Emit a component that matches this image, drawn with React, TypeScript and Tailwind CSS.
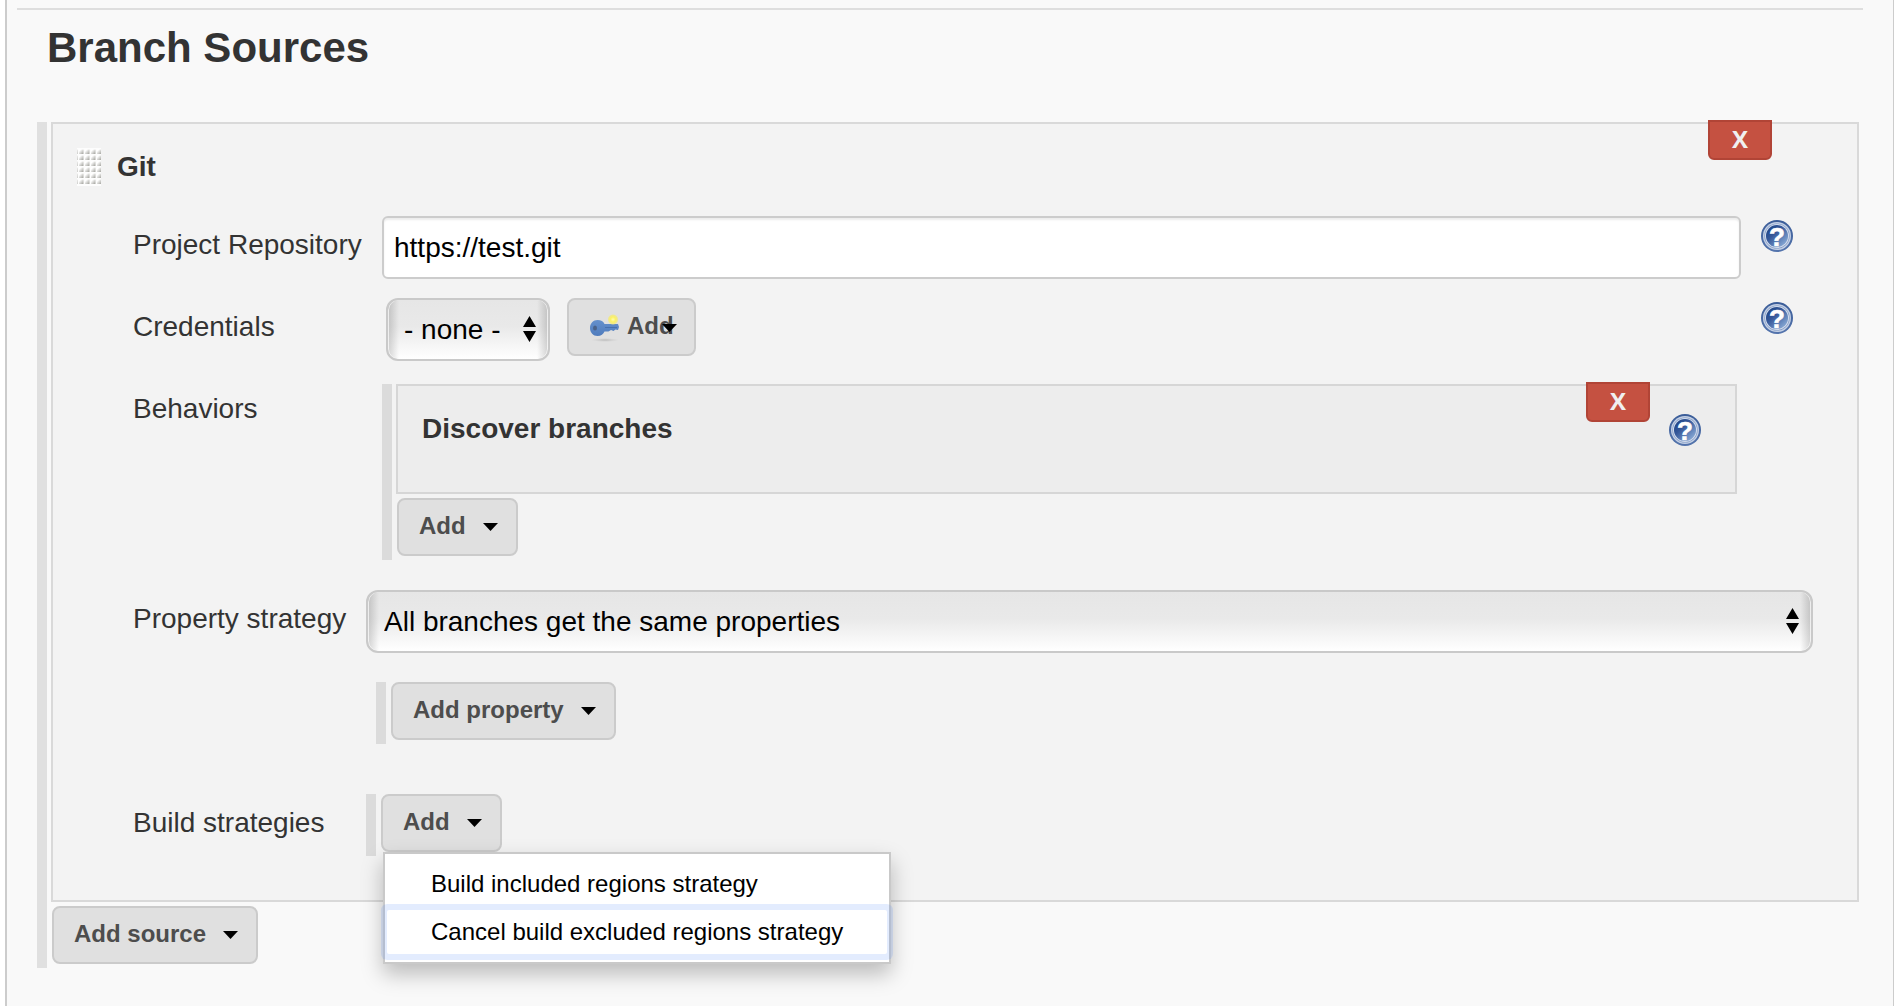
import type { ReactNode } from "react";

function HelpButton({ topic }: { topic: string }) {
  return (
    <button type="button" aria-label={"Help for " + topic} className="size-8 shrink-0">
      <svg viewBox="0 0 32 32" className="size-8" aria-hidden="true">
        <defs>
          <linearGradient id="help-fill" x1="0.1" y1="0.1" x2="0.9" y2="0.95">
            <stop offset="0" stopColor="#1f4587" />
            <stop offset="0.35" stopColor="#35589a" />
            <stop offset="1" stopColor="#8fb0da" />
          </linearGradient>
          <linearGradient id="help-rim" x1="0" y1="0" x2="0" y2="1">
            <stop offset="0" stopColor="#3a5c98" />
            <stop offset="1" stopColor="#5575ad" />
          </linearGradient>
        </defs>
        <circle cx="16" cy="16" r="16" fill="url(#help-rim)" />
        <circle cx="16" cy="16" r="14" fill="#c3cfe4" />
        <circle cx="16" cy="16" r="12.6" fill="#7d97c3" />
        <circle cx="16" cy="16" r="12" fill="#d3dcec" />
        <circle cx="16" cy="16" r="11" fill="url(#help-fill)" />
        <text
          x="16"
          y="25.500"
          textAnchor="middle"
          fill="#ffffff"
          stroke="#ffffff"
          strokeWidth="0.600"
          fontSize="26"
          fontWeight="700"
          fontFamily="Liberation Sans, sans-serif"
        >
          ?
        </text>
      </svg>
    </button>
  );
}

function DeleteButton({ label }: { label: string }) {
  return (
    <button
      type="button"
      aria-label={label}
      className="h-10 w-16 rounded-b-md border-2 border-[#b14436] bg-[#c55141] pb-0.5 text-center font-['Open_Sans',sans-serif] text-2xl leading-8 font-bold text-[#f0f0f0]"
    >
      X
    </button>
  );
}

function Caret() {
  return (
    <svg viewBox="0 0 15 8" className="h-2 w-[15px] shrink-0" aria-hidden="true">
      <path d="M0 0H15L7.5 8Z" fill="#000" />
    </svg>
  );
}

function MenuButton({ children }: { children: ReactNode }) {
  return (
    <button
      type="button"
      className="flex h-[58px] items-center gap-[17px] rounded-lg border-2 border-[#cbcbcb] bg-[#e0e0e0] pr-[18px] pb-0.5 pl-5 text-2xl font-bold whitespace-nowrap text-[#4d4d4d]"
    >
      {children}
      <span className="pt-0.5">
        <Caret />
      </span>
    </button>
  );
}

function SelectBox({ id, value, className }: { id: string; value: string; className: string }) {
  return (
    <div className={"relative " + className}>
      <select
        id={id}
        defaultValue={value}
        className="h-[63px] w-full appearance-none rounded-xl border-2 border-[#c9c9c9] bg-[linear-gradient(to_right,rgba(0,0,0,0.16),transparent_11px,transparent_calc(100%-11px),rgba(0,0,0,0.16)),linear-gradient(to_bottom,#e6e6e6,#e9e9e9_45%,#ffffff)] pr-10 pl-4 text-[28px] text-black shadow-[inset_1px_0_0_rgba(255,255,255,0.7),inset_-1px_0_0_rgba(255,255,255,0.7)]"
      >
        <option>{value}</option>
      </select>
      <svg
        viewBox="0 0 13 26"
        className="pointer-events-none absolute top-[18px] right-[14px] h-[26px] w-[13px]"
        aria-hidden="true"
      >
        <path d="M6.5 0L13 11H0ZM0 15H13L6.5 26Z" fill="#000" />
      </svg>
    </div>
  );
}

function Row({
  label,
  htmlFor,
  className,
  children,
}: {
  label?: string;
  htmlFor?: string;
  className: string;
  children: ReactNode;
}) {
  return (
    <div className={"flex items-start " + className}>
      <div className="w-[233px] shrink-0 pt-[13px] text-[28px] leading-8 whitespace-nowrap">
        {label && (htmlFor ? <label htmlFor={htmlFor}>{label}</label> : <span>{label}</span>)}
      </div>
      {children}
    </div>
  );
}

function KeyIcon() {
  return (
    <svg viewBox="0 0 32 32" className="size-8 shrink-0" aria-hidden="true">
      <defs>
        <radialGradient id="key-spark">
          <stop offset="0" stopColor="#fffbb0" />
          <stop offset="0.45" stopColor="#fbf265" />
          <stop offset="0.8" stopColor="#f3ea7a" stopOpacity="0.8" />
          <stop offset="1" stopColor="#f3ea7a" stopOpacity="0" />
        </radialGradient>
        <radialGradient id="key-shade">
          <stop offset="0" stopColor="#b0b0b0" stopOpacity="0.8" />
          <stop offset="1" stopColor="#c8c8c8" stopOpacity="0" />
        </radialGradient>
        <linearGradient id="key-body" x1="0" y1="0" x2="0" y2="1">
          <stop offset="0" stopColor="#6590cc" />
          <stop offset="1" stopColor="#4f7cbd" />
        </linearGradient>
      </defs>
      <ellipse cx="16" cy="30" rx="14" ry="2" fill="url(#key-shade)" />
      <path
        d="M8.500 10C12 10 14.500 11.500 15.500 14H29L30 17L29 20L26.500 19.500L24.500 21L22 20L19.500 21.500H15.500C14.500 24 12 26 8.500 26C4.300 26 1 22.500 1 18S4.300 10 8.500 10Z"
        fill="url(#key-body)"
      />
      <path d="M16 17.500H28" stroke="#4670ae" strokeWidth="1" />
      <circle cx="24" cy="9.500" r="5.500" fill="url(#key-spark)" />
      <ellipse cx="6" cy="18" rx="2" ry="2.600" fill="#4a6288" />
    </svg>
  );
}

function DragGrip() {
  return (
    <svg viewBox="0 0 24 38" className="h-[38px] w-6 shrink-0" aria-hidden="true">
      <defs>
        <linearGradient id="grip-dot" x1="0" y1="0" x2="1" y2="1">
          <stop offset="0.2" stopColor="#fff" />
          <stop offset="0.9" stopColor="#a9a9a4" />
        </linearGradient>
        <pattern id="grip" x="1" y="1" width="6" height="6" patternUnits="userSpaceOnUse">
          <rect x="1" y="0.500" width="4.500" height="4.500" fill="url(#grip-dot)" />
        </pattern>
      </defs>
      <rect width="24" height="38" fill="#fdfdfd" />
      <rect width="24" height="37" fill="url(#grip)" />
    </svg>
  );
}

export default function App() {
  return (
    <div className="min-h-screen bg-white pl-[5px] font-['Liberation_Sans',Arial,sans-serif] text-[#333]">
      <main className="min-h-screen border-r border-l-2 border-r-[#ccc] border-l-[#ccc] bg-[#f9f9f9] pt-2 pr-[30px] pl-2.5">
        <hr className="border-0 border-t-2 border-[#dedede]" />
        <h1 className="mt-4 ml-[30px] text-[42px] leading-[44px] font-bold">Branch Sources</h1>

        <div className="mt-[52px] mr-1 ml-5 border-l-[10px] border-[#e0e0e0] pb-1 pl-1">
          <section className="border-2 border-[#d9d9d9] bg-[#f3f3f3] pr-11 pl-6">
            <div className="flex h-[92px] items-start">
              <div className="flex flex-1 items-center gap-4 pt-6">
                <DragGrip />
                <h2 className="text-[28px] leading-8 font-bold">Git</h2>
              </div>
              <div className="-mt-1 mr-[41px]">
                <DeleteButton label="Delete Git source" />
              </div>
            </div>

            <div className="pl-14">
              <Row label="Project Repository" htmlFor="repository" className="h-[82px]">
                <input
                  id="repository"
                  type="text"
                  defaultValue="https://test.git"
                  className="ml-4 h-[63px] min-w-0 flex-1 rounded-md border-2 border-[#ccc] bg-white px-2.5 text-[28px] text-black shadow-[inset_0_2px_2px_rgba(0,0,0,0.08)]"
                />
                <div className="mx-5 mt-1">
                  <HelpButton topic="Project Repository" />
                </div>
              </Row>

              <Row label="Credentials" htmlFor="credentials" className="h-[82px]">
                <SelectBox id="credentials" value="- none -" className="ml-5 w-[164px]" />
                <button
                  type="button"
                  className="relative ml-[17px] flex h-[58px] w-[129px] items-center gap-1.5 rounded-lg border-2 border-[#cbcbcb] bg-[#e0e0e0] pb-0.5 pl-5 text-2xl font-bold text-[#4d4d4d]"
                >
                  <KeyIcon />
                  Add
                  <span className="absolute top-6 right-[17px]">
                    <Caret />
                  </span>
                </button>
                <div className="mt-1 mr-5 ml-auto">
                  <HelpButton topic="Credentials" />
                </div>
              </Row>

              <Row label="Behaviors" className="pb-[30px]">
                <div className="mt-1 mr-[76px] ml-4 flex-1 border-l-[10px] border-[#dbdbdb] pb-1 pl-1">
                  <section className="mb-1 flex h-[110px] items-start border-2 border-[#d6d6d6] bg-[#ededed] pr-[34px] pl-6">
                    <h3 className="flex-1 pt-[27px] text-[28px] leading-8 font-bold">
                      Discover branches
                    </h3>
                    <div className="-mt-1">
                      <DeleteButton label="Delete Discover branches" />
                    </div>
                    <div className="mt-7 ml-[19px]">
                      <HelpButton topic="Discover branches" />
                    </div>
                  </section>
                  <div className="flex pl-px">
                    <MenuButton>Add</MenuButton>
                  </div>
                </div>
              </Row>

              <Row label="Property strategy" htmlFor="property-strategy" className="h-[92px]">
                <SelectBox
                  id="property-strategy"
                  value="All branches get the same properties"
                  className="flex-1"
                />
              </Row>

              <Row className="h-28">
                <div className="ml-2.5 border-l-[10px] border-[#dbdbdb] pb-1 pl-[5px]">
                  <MenuButton>Add property</MenuButton>
                </div>
              </Row>

              <Row label="Build strategies" className="h-[106px]">
                <div className="relative border-l-[10px] border-[#dbdbdb] pb-1 pl-[5px]">
                  <MenuButton>Add</MenuButton>
                  <ul
                    role="menu"
                    className="absolute top-[58px] left-[7px] z-10 flex flex-col gap-1 border-2 border-[#c9c9c9] bg-white px-0.5 py-2 text-2xl whitespace-nowrap text-black shadow-[0_10px_20px_rgba(0,0,0,0.25)]"
                  >
                    <li role="none">
                      <button
                        type="button"
                        role="menuitem"
                        className="h-11 w-full pr-11 pl-11 text-left"
                      >
                        Build included regions strategy
                      </button>
                    </li>
                    <li role="none">
                      <button
                        type="button"
                        role="menuitem"
                        className="h-11 w-full rounded-xs pr-11 pl-11 text-left shadow-[0_0_0_6px_rgba(66,125,245,0.15)]"
                      >
                        Cancel build excluded regions strategy
                      </button>
                    </li>
                  </ul>
                </div>
              </Row>
            </div>
          </section>
          <div className="mt-1 flex pl-px">
            <MenuButton>Add source</MenuButton>
          </div>
        </div>
      </main>
    </div>
  );
}
